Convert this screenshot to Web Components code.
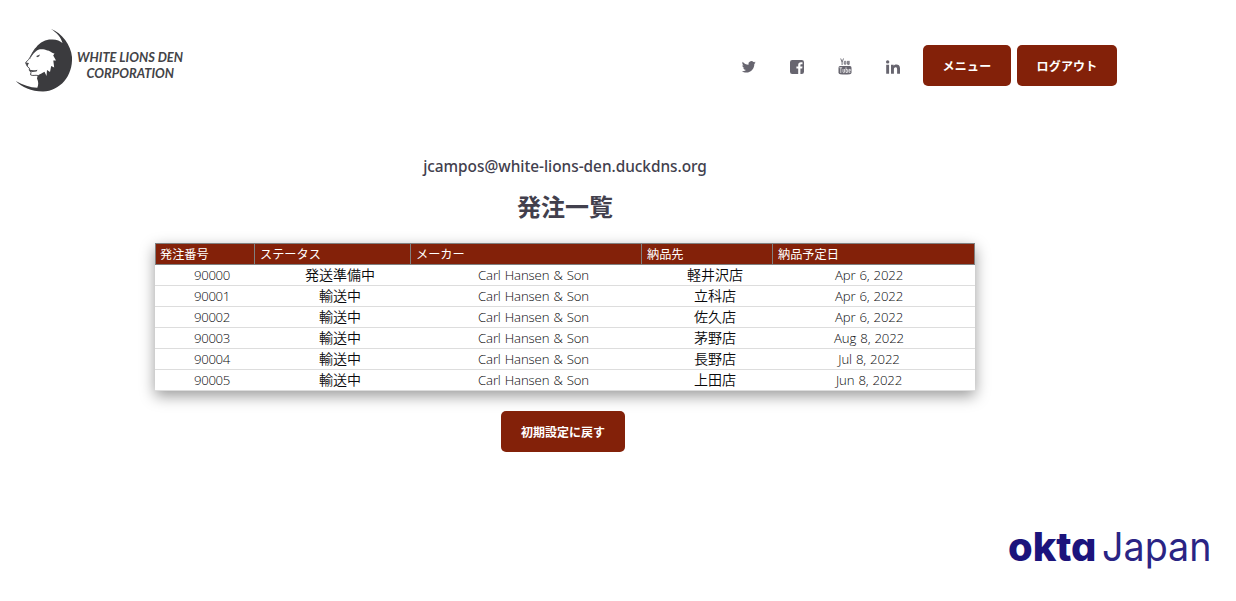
<!DOCTYPE html>
<html lang="ja">
<head>
<meta charset="utf-8">
<title>White Lions Den Corporation</title>
<style>
html,body{margin:0;background:#fff;height:601px;overflow:hidden}
body{font-family:"Noto Sans","Noto Sans CJK JP",sans-serif;color:#42404d}
</style>
</head>
<body>
<den-app></den-app>
<script>
const define=(name,html)=>customElements.define(name,class extends HTMLElement{
  constructor(){super();this.attachShadow({mode:'open'}).innerHTML=typeof html==='function'?html(this):html;}
});

define('den-logo',`<style>:host{display:block;width:200px;height:72px}svg{display:block}</style>
<svg width="200" height="72" viewBox="0 25 200 72">
<path fill="#3b3b3e" d="M50.700 28.700C62 33 71 45 72 57C73 76 60 91 43 91.500C31 91.500 22 87 15.700 81C23 85 30 87.500 37.300 87.800C38.600 84.500 38.600 82 37 78.500L37.600 75.800C40 74 42 73.500 44.500 71.800L46.500 76L47 70L50 72L51.200 66L54.200 67.500L53.300 60.500L56 60.500L53.200 55.500L54.500 53.500C51 53 50 50.500 47.300 50.500C44 49 38.500 48.300 35.700 51.500C33 53.500 31 56.500 30 59.500C30.500 56 33 50 36 47.500C40 42 46 39.500 51 39.500C56 39 60 41 62.500 43C61 37 57 33 50.700 28.700Z"/>
<path fill="none" stroke="#505054" stroke-width="1" d="M36 49.500C32.500 51.500 30.500 57 28.700 59.500C27.500 60.800 26 61.500 25.700 63L27.200 66.300L29.400 68.200L29.300 70.200L31 72.300L30.500 74.800C32.500 76.200 35.500 74.800 38 75.500"/>
<path fill="#48484c" d="M36.300 56L40 54.600 39 56.600 37 57.200zM25.500 62.600l3.500.4-1 1.800-.2 2zM29.300 69.600Q33 71 37.500 69.700L36.500 71.400 32.500 71.900 30 71.600z"/>
<g font-family="Lato" font-weight="700" font-style="italic" font-size="12.300" fill="#434347"><text x="77" y="62" textLength="106" lengthAdjust="spacingAndGlyphs">WHITE LIONS DEN</text><text x="86.500" y="78.200" textLength="87.500" lengthAdjust="spacingAndGlyphs">CORPORATION</text></g>
</svg>`);

const icons={
twitter:'<path d="M14.700 3.500c-.5.200-1 .4-1.600.5.600-.4 1-.9 1.200-1.600-.5.300-1.100.6-1.800.7A2.900 2.900 0 0 0 7.500 5.700C5.200 5.600 3.100 4.500 1.700 2.700c-.8 1.400-.3 3 .9 3.800-.5 0-.9-.1-1.300-.3 0 1.400 1 2.500 2.300 2.800-.4.100-.8.100-1.300.1.400 1.100 1.400 1.900 2.700 2-1.200.9-2.600 1.300-4.200 1.200 1.300.8 2.800 1.300 4.400 1.300 5.300 0 8.300-4.500 8.100-8.600.5-.4 1-.9 1.400-1.500z"/>',
facebook:'<path fill-rule="evenodd" d="M3.200 1h9.600A2.200 2.200 0 0 1 15 3.200v9.600a2.200 2.200 0 0 1-2.200 2.200h-1.400V9.600h1.800l.3-2.100h-2.100V6.200c0-.6.200-1 1-1h1.100V3.300l-1.600-.1c-1.600 0-2.700 1-2.700 2.700v1.600H7.400v2.100h1.800V15h-6A2.200 2.200 0 0 1 1 12.800V3.200A2.200 2.200 0 0 1 3.200 1z"/>',
youtube:'<path fill="none" stroke="#67656f" stroke-width=".9" d="M3.700-.5l1.400 3.700V6M6.500-.5L5.100 3.200M7.300 2.500v2.600q.8.800 1.500 0V2.500q-.8-.8-1.500 0zM10.400 1.900v3.300q.8.700 1.500 0V1.900v3.900"/><path d="M3 7h10q1.500 0 1.500 1.700v4.900q0 1.500-1.700 1.700-4.800.5-9.600 0-1.700-.2-1.700-1.700V8.700Q1.500 7 3 7z"/><path fill="none" stroke="#fff" stroke-width=".7" d="M2.400 8.700h2.800M3.800 8.700v5.300M6 10v3.300q.7.700 1.500 0V10M9 8.300v5.200h1.400v-3H9M13.400 13.300h-1.500v-2.900h1.400v1.500h-1.400"/>',
linkedin:'<path d="M1.200 5.700h2.900v9H1.200zM6 5.700h2.700v1.300c1.200-2.200 6.300-2.100 6.300 2.200v5.500h-2.900V10c0-2.500-3.200-2.300-3.200.2v4.500H6z"/><circle cx="2.650" cy="2.900" r="1.700"/>'};
define('social-icon',el=>`<style>:host{display:block;width:16px;height:16px;margin-right:32px}svg{display:block;overflow:visible;fill:#67656f}</style><svg width="16" height="16" viewBox="0 0 16 16">${icons[el.getAttribute('name')]}</svg>`);

define('den-button',`<style>:host{display:block}button{all:unset;box-sizing:border-box;display:flex;align-items:center;justify-content:center;width:100%;height:41px;border-radius:5px;background:#832109;color:#fff;font:700 12px/18px "Noto Sans CJK JP",sans-serif;white-space:nowrap;cursor:pointer}span{letter-spacing:var(--track,0)}</style><button><span><slot></slot></span></button>`);

define('den-header',`<style>:host{display:flex;height:116px;padding:25px 119px 0 0;box-sizing:border-box;align-items:flex-start}
nav{display:flex;margin-left:auto;padding-top:20px}.social{display:flex;padding-top:14px;margin-right:-10px}den-button{margin-left:6px}.menu{width:88px;--track:.2px}.out{width:100px;--track:.2px}</style>
<den-logo></den-logo><nav><div class="social"><social-icon name="twitter"></social-icon><social-icon name="facebook"></social-icon><social-icon name="youtube"></social-icon><social-icon name="linkedin"></social-icon></div><den-button class="menu" style="margin-left:0">メニュー</den-button><den-button class="out">ログアウト</den-button></nav>`);

const rows=[['90000','発送準備中','Carl Hansen & Son','軽井沢店','Apr 6, 2022'],['90001','輸送中','Carl Hansen & Son','立科店','Apr 6, 2022'],['90002','輸送中','Carl Hansen & Son','佐久店','Apr 6, 2022'],['90003','輸送中','Carl Hansen & Son','茅野店','Aug 8, 2022'],['90004','輸送中','Carl Hansen & Son','長野店','Jul 8, 2022'],['90005','輸送中','Carl Hansen & Son','上田店','Jun 8, 2022']];
define('order-table',`<style>:host{display:block;width:820px;height:148px;box-shadow:0 5px 14px rgba(0,0,0,.4);background:#fff}
.r{display:grid;grid-template-columns:99px 156px 231px 131px 203px;box-sizing:border-box;height:21px;border-bottom:1px solid #ddd}
.h{height:22px;background:#832109;border:1px solid #808080;border-left:0;color:#fff;font:400 12.200px/21px "Noto Sans CJK JP",sans-serif}
.h span{border-left:1px solid #808080;padding-left:5px}.h span:first-child{padding-left:4px}
.b{color:#09090b;font:300 13.200px/21px "Open Sans","Noto Sans CJK JP",sans-serif;letter-spacing:-.15px;word-spacing:.8px;text-align:center}
.b span{white-space:nowrap}.b span:first-child{padding-left:15px;letter-spacing:-.35px}.b span:nth-child(2),.b span:nth-child(4){font:350 14px/19px "Noto Sans CJK JP",sans-serif;letter-spacing:0;padding-left:16px}.b span:nth-child(4){padding-left:17px}.b span:nth-child(3){padding-left:16px}.b span:nth-child(5){padding-right:9px}</style>
<div class="r h"><span>発注番号</span><span>ステータス</span><span>メーカー</span><span>納品先</span><span>納品予定日</span></div>
${rows.map(r=>`<div class="r b">${r.map(c=>`<span>${c.replace('&','&amp;')}</span>`).join('')}</div>`).join('')}`);

define('okta-logo',`<style>:host{display:block;width:216px;height:66px}svg{display:block}</style><svg width="216" height="66" viewBox="1002 518 216 66" fill="#1c147c" font-family="Inter" font-size="39.500"><text x="1008" y="561" font-weight="800" style="font-feature-settings:'cv11'" textLength="88.500" lengthAdjust="spacingAndGlyphs">okta</text><text x="1102" y="561" font-weight="400" fill="#2a2484" textLength="109.500" lengthAdjust="spacingAndGlyphs">Japan</text></svg>`);

define('den-app',`<style>:host{display:block;width:1236px;height:601px}
main{display:flex;flex-direction:column;align-items:center;width:820px;margin-left:155px;height:402px}
.mail{margin-top:39px;height:24px;font:500 15.400px/24px "Noto Sans",sans-serif;letter-spacing:-.03px}
h1{margin:10px 0 0;height:34px;font:700 24px/34px "Noto Sans CJK JP",sans-serif}
order-table{margin-top:20px}den-button{width:124px;margin:20px 4px 0 0}footer{display:flex;justify-content:flex-end;padding-right:18px}</style>
<den-header></den-header><main><div class="mail">jcampos@white-lions-den.duckdns.org</div><h1>発注一覧</h1><order-table></order-table><den-button>初期設定に戻す</den-button></main><footer><okta-logo></okta-logo></footer>`);
</script>
</body>
</html>
